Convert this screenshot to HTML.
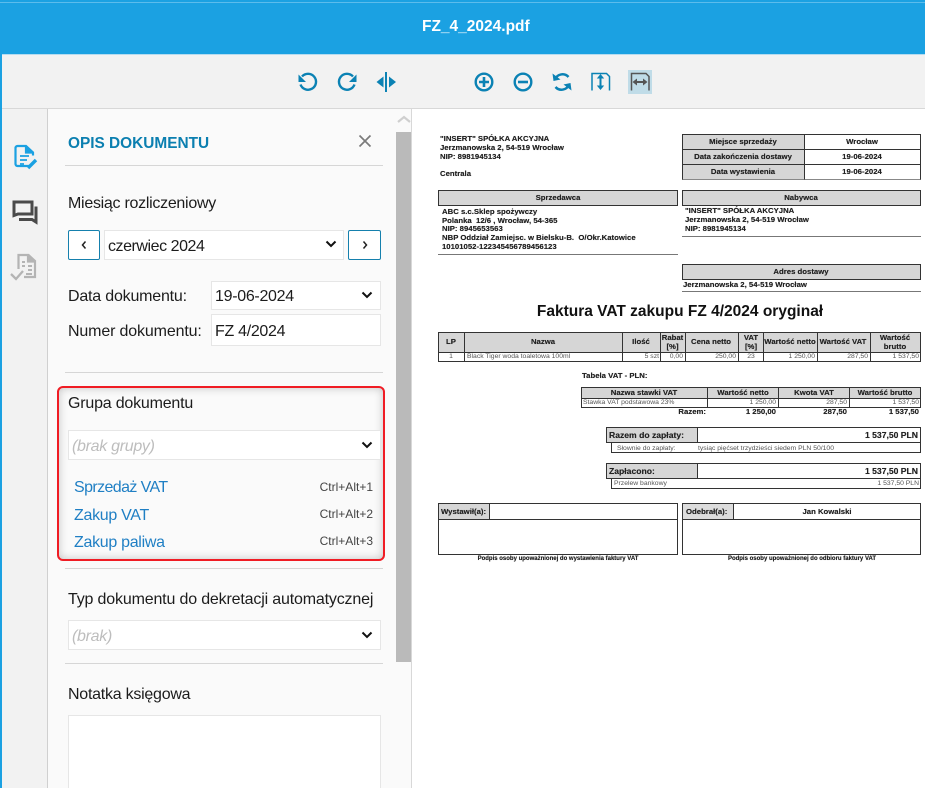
<!DOCTYPE html>
<html><head><meta charset="utf-8"><style>
html,body{margin:0;padding:0;width:925px;height:788px;overflow:hidden;background:#fff}
body{position:relative;font-family:"Liberation Sans",sans-serif;color:#1a1a1a}
.a{position:absolute;box-sizing:border-box}
.t{position:absolute;white-space:nowrap;line-height:1}
.l{font-size:16px;color:#1c1c1c;margin-top:1px;letter-spacing:-.2px}
.hr{position:absolute;left:65px;width:318px;height:1px;background:#d6d6d6}
.box{position:absolute;box-sizing:border-box;background:#fff;border:1px solid #e6e6e6}
.it{font-size:16px;color:#1f7fc4;left:74px;margin-top:1px;letter-spacing:-.3px}
.sc{font-size:12px;color:#444;right:552px}
.chev{position:absolute}
.p{position:absolute;white-space:nowrap;line-height:1;font-size:7.75px;color:#222;text-shadow:0 0 .4px #444}
.b{font-weight:bold}
.n{text-shadow:none;color:#555;font-size:6.8px;margin-top:1px}
.c{transform:translateX(-50%)}
.r{transform:translateX(-100%)}
.g{position:absolute;box-sizing:border-box;background:#d6d6d6;border:1px solid #333}
.w{position:absolute;box-sizing:border-box;background:#fff;border:1px solid #333}
.hl{position:absolute;height:1px;background:#777}
</style></head><body>
<div class="a" style="left:0;top:0;width:925px;height:54px;background:#1ba1e2"></div>
<div class="a" style="left:0;top:2px;width:925px;height:1px;background:#5cbcec"></div>
<div class="a" style="left:0;top:54px;width:925px;height:1px;background:#b6dcf0"></div>
<div class="t" style="left:422px;top:19px;font-size:15.5px;font-weight:bold;color:#fff">FZ_4_2024.pdf</div>
<div class="a" style="left:0;top:55px;width:925px;height:53px;background:#f2f2f2"></div>
<div class="a" style="left:0;top:108px;width:925px;height:1px;background:#d8d8d8"></div>
<div class="a" style="left:0;top:54px;width:2px;height:734px;background:#1ba1e2"></div>
<div class="a" style="left:2px;top:109px;width:45px;height:679px;background:#f2f2f2"></div>
<div class="a" style="left:47px;top:109px;width:1px;height:679px;background:#d0d0d0"></div>
<div class="a" style="left:48px;top:109px;width:363px;height:679px;background:#fafafa"></div>
<div class="a" style="left:411px;top:109px;width:1px;height:679px;background:#d8d8d8"></div>
<div class="a" style="left:396px;top:132px;width:15px;height:530px;background:#bababa"></div>

<!-- toolbar icons -->
<svg class="a" style="left:0;top:60px" width="925" height="45" viewBox="0 60 925 45" fill="none" stroke="#0b82b4" stroke-width="2.4">
<rect x="628" y="70" width="24" height="24" fill="#c0dce8" stroke="none"/>
<path d="M302 76.5a8 8 0 1 1-1.5 8"/><path d="M298.5 74.5v7.5h7.5z" fill="#0b82b4" stroke="none"/>
<path d="M353 76.5a8 8 0 1 0 1.500 8"/><path d="M356.500 74.500v7.500h-7.500z" fill="#0b82b4" stroke="none"/>
<path d="M386 72v20" stroke-width="2"/><path d="M383.500 76.500v11l-7-5.500zM389 76.500v11l7-5.500z" fill="#0b82b4" stroke="none"/>
<circle cx="484" cy="82" r="8.300"/><path d="M479 82h10M484 77v10" stroke-width="2.600"/>
<circle cx="523" cy="82" r="8.300"/><path d="M518 82h10" stroke-width="2.600"/>
<path d="M555 79.500a8 8 0 0 1 13.500-2.500M569 84.500a8 8 0 0 1-13.500 2.500" stroke-width="2.500"/>
<path d="M552.500 73.500l1 7.500 7-1.500zM571.500 90.500l-1-7.500-7 1.500z" fill="#0b82b4" stroke="none"/>
<path d="M592 90.500v-17h14.500l3 3v14" stroke-width="1.500"/><path d="M600.500 76v12" stroke-width="2"/><path d="M596.800 78.500l3.700-4.500 3.700 4.500zM596.800 85.500l3.700 4.500 3.700-4.500z" fill="#0b82b4" stroke="none"/>
<path d="M631.500 90.500v-17h14.500l3 3v14" stroke="#555" stroke-width="1.500"/><path d="M634 82h12" stroke="#555" stroke-width="2"/><path d="M637 78.500l-4.500 3.500 4.500 3.500zM643 78.500l4.500 3.500-4.500 3.500z" fill="#555" stroke="none"/>
</svg>
<svg class="a" style="left:396px;top:114px" width="16" height="12"><path d="M2 8l6-5 6 5" fill="none" stroke="#cfcfcf" stroke-width="2.200"/></svg>

<!-- rail icons -->
<svg class="a" style="left:10px;top:140px" width="30" height="32" fill="none" stroke="#1ba1e2" stroke-width="2.200">
<path d="M19 26H7.500a2 2 0 0 1-2-2V8a2 2 0 0 1 2-2h8.500l7 6.500v3"/><path d="M16 6.500v6h7" fill="#1ba1e2"/><path d="M10 16h9M10 20h7M10 24h4" stroke-width="1.800"/><path d="M18 28l8-8" stroke-width="3.400"/>
</svg>
<svg class="a" style="left:10px;top:197px" width="30" height="30" fill="none" stroke="#4a4a4a" stroke-width="3">
<path d="M4 17.500V5h18v12H8l-4 1.500z"/><path d="M26 9.500v15.500l-4-2.500H9"/>
</svg>
<svg class="a" style="left:8px;top:251px" width="30" height="34" fill="none" stroke="#b4b4b4" stroke-width="2.200">
<path d="M10.500 18V4h10l6.500 6v16h-11"/><path d="M20 4.500v6h7" fill="#b4b4b4"/><path d="M14 11h3M14 15h3M20 15h4M20 19h4M18 23h6" stroke-width="2"/><path d="M3 23l5 5 7-8" stroke-width="2.300"/>
</svg>

<!-- panel -->
<div class="t" style="left:68px;top:136px;font-size:15.4px;font-weight:bold;color:#0b7fb0">OPIS DOKUMENTU</div>
<svg class="a" style="left:358px;top:134px" width="14" height="14"><path d="M1.500 1.500l11 11M12.500 1.500l-11 11" stroke="#7a7a7a" stroke-width="1.700"/></svg>
<div class="hr" style="top:165px"></div>
<div class="t l" style="left:68px;top:195px;letter-spacing:-.28px">Miesiąc rozliczeniowy</div>
<div class="a" style="left:68px;top:230px;width:32px;height:30px;background:#fff;border:1px solid #1580ad;border-radius:2px"></div>
<svg class="a" style="left:80px;top:240px" width="8" height="10"><path d="M5.500 1.500L2.500 5l3 3.500" fill="none" stroke="#222" stroke-width="1.500"/></svg>
<div class="box" style="left:104px;top:230px;width:240px;height:30px"></div>
<div class="t l" style="left:108px;top:238px;letter-spacing:-.45px">czerwiec 2024</div>
<div class="a" style="left:348px;top:230px;width:33px;height:30px;background:#fff;border:1px solid #1580ad;border-radius:2px"></div>
<svg class="a" style="left:361px;top:240px" width="8" height="10"><path d="M2.500 1.500L5.500 5l-3 3.500" fill="none" stroke="#222" stroke-width="1.500"/></svg>
<svg class="chev" style="left:325px;top:240px" width="12" height="8"><path d="M1.500 1.500L6 6l4.500-4.500" fill="none" stroke="#111" stroke-width="2"/></svg>
<div class="t l" style="left:68px;top:288px">Data dokumentu:</div>
<div class="box" style="left:211px;top:281px;width:170px;height:29px"></div>
<div class="t l" style="left:215px;top:288px;letter-spacing:-.3px">19-06-2024</div>
<svg class="chev" style="left:361px;top:291px" width="12" height="8"><path d="M1.500 1.500L6 6l4.500-4.500" fill="none" stroke="#111" stroke-width="2"/></svg>
<div class="t l" style="left:68px;top:323px;letter-spacing:-.15px">Numer dokumentu:</div>
<div class="box" style="left:211px;top:314px;width:170px;height:32px"></div>
<div class="t l" style="left:215px;top:323px;letter-spacing:-.3px">FZ 4/2024</div>
<div class="hr" style="top:372px"></div>

<div class="a" style="left:57px;top:386px;width:328px;height:175px;border:2px solid #f01c24;border-radius:6px;box-shadow:inset 0 0 9px rgba(0,0,0,.22)"></div>
<div class="t l" style="left:68px;top:395px">Grupa dokumentu</div>
<div class="box" style="left:68px;top:430px;width:313px;height:30px"></div>
<div class="t l" style="left:72px;top:438px;font-style:italic;color:#bdbdbd;letter-spacing:-.3px">(brak grupy)</div>
<svg class="chev" style="left:361px;top:441px" width="12" height="8"><path d="M1.500 1.500L6 6l4.500-4.500" fill="none" stroke="#111" stroke-width="2"/></svg>
<div class="t it" style="top:479px;letter-spacing:-.6px">Sprzedaż VAT</div>
<div class="t sc" style="top:481px">Ctrl+Alt+1</div>
<div class="t it" style="top:507px">Zakup VAT</div>
<div class="t sc" style="top:508px">Ctrl+Alt+2</div>
<div class="t it" style="top:534px">Zakup paliwa</div>
<div class="t sc" style="top:535px">Ctrl+Alt+3</div>
<div class="hr" style="top:568px"></div>
<div class="t l" style="left:68px;top:591px;letter-spacing:-.17px">Typ dokumentu do dekretacji automatycznej</div>
<div class="box" style="left:68px;top:620px;width:313px;height:30px"></div>
<div class="t l" style="left:72px;top:628px;font-style:italic;color:#bdbdbd;letter-spacing:-.3px">(brak)</div>
<svg class="chev" style="left:361px;top:631px" width="12" height="8"><path d="M1.500 1.500L6 6l4.500-4.500" fill="none" stroke="#111" stroke-width="2"/></svg>
<div class="hr" style="top:663px"></div>
<div class="t l" style="left:68px;top:686px;letter-spacing:-.25px">Notatka księgowa</div>
<div class="box" style="left:68px;top:715px;width:313px;height:90px"></div>

<!-- PDF -->
<div class="p b" style="left:440px;top:135px">"INSERT" SPÓŁKA AKCYJNA</div>
<div class="p b" style="left:440px;top:144px">Jerzmanowska 2, 54-519 Wrocław</div>
<div class="p b" style="left:440px;top:153px">NIP: 8981945134</div>
<div class="p b" style="left:440px;top:170px">Centrala</div>

<div class="g" style="left:682px;top:134px;width:123px;height:16px"></div>
<div class="g" style="left:682px;top:149px;width:123px;height:16px"></div>
<div class="g" style="left:682px;top:164px;width:123px;height:16px;border-bottom-color:#888"></div>
<div class="w" style="left:804px;top:134px;width:117px;height:16px"></div>
<div class="w" style="left:804px;top:149px;width:117px;height:16px"></div>
<div class="w" style="left:804px;top:164px;width:117px;height:16px;border-bottom-color:#888"></div>
<div class="p b c" style="left:743px;top:138px">Miejsce sprzedaży</div>
<div class="p b c" style="left:743px;top:153px">Data zakończenia dostawy</div>
<div class="p b c" style="left:743px;top:168px">Data wystawienia</div>
<div class="p b c" style="left:862px;top:138px">Wrocław</div>
<div class="p b c" style="left:862px;top:153px">19-06-2024</div>
<div class="p b c" style="left:862px;top:168px">19-06-2024</div>

<div class="g" style="left:438px;top:190px;width:240px;height:16px"></div>
<div class="p b c" style="left:558px;top:194px">Sprzedawca</div>
<div class="p b" style="left:442px;top:208px">ABC s.c.Sklep spożywczy</div>
<div class="p b" style="left:442px;top:217px">Polanka&nbsp; 12/6 , Wrocław, 54-365</div>
<div class="p b" style="left:442px;top:225px">NIP: 8945653563</div>
<div class="p b" style="left:442px;top:234px">NBP Oddział Zamiejsc. w Bielsku-B.&nbsp; O/Okr.Katowice</div>
<div class="p b" style="left:442px;top:243px">10101052-122345456789456123</div>
<div class="hl" style="left:438px;top:254px;width:240px"></div>

<div class="g" style="left:682px;top:190px;width:239px;height:16px"></div>
<div class="p b c" style="left:801px;top:194px">Nabywca</div>
<div class="p b" style="left:685px;top:207px">"INSERT" SPÓŁKA AKCYJNA</div>
<div class="p b" style="left:685px;top:216px">Jerzmanowska 2, 54-519 Wrocław</div>
<div class="p b" style="left:685px;top:225px">NIP: 8981945134</div>
<div class="hl" style="left:682px;top:236px;width:239px"></div>

<div class="g" style="left:682px;top:264px;width:239px;height:16px"></div>
<div class="p b c" style="left:801px;top:268px">Adres dostawy</div>
<div class="p b" style="left:683px;top:281px">Jerzmanowska 2, 54-519 Wrocław</div>
<div class="hl" style="left:682px;top:291px;width:239px"></div>

<div class="t" style="left:680px;top:304px;transform:translateX(-50%);font-size:15.5px;font-weight:bold;color:#111">Faktura VAT zakupu FZ 4/2024 oryginał</div>

<div class="g" style="left:438px;top:332px;width:27px;height:21px"></div>
<div class="g" style="left:464px;top:332px;width:159px;height:21px"></div>
<div class="g" style="left:622px;top:332px;width:39px;height:21px"></div>
<div class="g" style="left:660px;top:332px;width:26px;height:21px"></div>
<div class="g" style="left:685px;top:332px;width:54px;height:21px"></div>
<div class="g" style="left:738px;top:332px;width:26px;height:21px"></div>
<div class="g" style="left:763px;top:332px;width:55px;height:21px"></div>
<div class="g" style="left:817px;top:332px;width:54px;height:21px"></div>
<div class="g" style="left:870px;top:332px;width:51px;height:21px"></div>
<div class="p b c" style="left:451px;top:338px">LP</div>
<div class="p b c" style="left:543px;top:338px">Nazwa</div>
<div class="p b c" style="left:641px;top:338px">Ilość</div>
<div class="p b c" style="left:672.500px;top:334px">Rabat</div>
<div class="p b c" style="left:672.500px;top:343px">[%]</div>
<div class="p b c" style="left:711px;top:338px">Cena netto</div>
<div class="p b c" style="left:751px;top:334px">VAT</div>
<div class="p b c" style="left:751px;top:343px">[%]</div>
<div class="p b c" style="left:790px;top:338px">Wartość netto</div>
<div class="p b c" style="left:843px;top:338px">Wartość VAT</div>
<div class="p b c" style="left:895px;top:334px">Wartość</div>
<div class="p b c" style="left:895px;top:343px">brutto</div>

<div class="w" style="left:438px;top:352px;width:27px;height:10px"></div>
<div class="w" style="left:464px;top:352px;width:159px;height:10px"></div>
<div class="w" style="left:622px;top:352px;width:39px;height:10px"></div>
<div class="w" style="left:660px;top:352px;width:26px;height:10px"></div>
<div class="w" style="left:685px;top:352px;width:54px;height:10px"></div>
<div class="w" style="left:738px;top:352px;width:26px;height:10px"></div>
<div class="w" style="left:763px;top:352px;width:55px;height:10px"></div>
<div class="w" style="left:817px;top:352px;width:54px;height:10px"></div>
<div class="w" style="left:870px;top:352px;width:51px;height:10px"></div>
<div class="p n c" style="left:451px;top:353px">1</div>
<div class="p n" style="left:467px;top:353px">Black Tiger woda toaletowa 100ml</div>
<div class="p n r" style="left:659px;top:353px">5 szt</div>
<div class="p n r" style="left:683px;top:353px">0,00</div>
<div class="p n r" style="left:736px;top:353px">250,00</div>
<div class="p n c" style="left:751px;top:353px">23</div>
<div class="p n r" style="left:815px;top:353px">1 250,00</div>
<div class="p n r" style="left:868px;top:353px">287,50</div>
<div class="p n r" style="left:919px;top:353px">1 537,50</div>

<div class="p b" style="left:582px;top:372px">Tabela VAT - PLN:</div>
<div class="g" style="left:581px;top:387px;width:127px;height:12px"></div>
<div class="g" style="left:707px;top:387px;width:72px;height:12px"></div>
<div class="g" style="left:778px;top:387px;width:72px;height:12px"></div>
<div class="g" style="left:849px;top:387px;width:72px;height:12px"></div>
<div class="p b c" style="left:644px;top:389px">Nazwa stawki VAT</div>
<div class="p b c" style="left:743px;top:389px">Wartość netto</div>
<div class="p b c" style="left:814px;top:389px">Kwota VAT</div>
<div class="p b c" style="left:885px;top:389px">Wartość brutto</div>
<div class="w" style="left:581px;top:398px;width:127px;height:10px"></div>
<div class="w" style="left:707px;top:398px;width:72px;height:10px"></div>
<div class="w" style="left:778px;top:398px;width:72px;height:10px"></div>
<div class="w" style="left:849px;top:398px;width:72px;height:10px"></div>
<div class="p n" style="left:583px;top:399px">Stawka VAT podstawowa 23%</div>
<div class="p n r" style="left:776px;top:399px">1 250,00</div>
<div class="p n r" style="left:847px;top:399px">287,50</div>
<div class="p n r" style="left:919px;top:399px">1 537,50</div>
<div class="p b r" style="left:706px;top:408px">Razem:</div>
<div class="p b r" style="left:776px;top:408px">1 250,00</div>
<div class="p b r" style="left:847px;top:408px">287,50</div>
<div class="p b r" style="left:919px;top:408px">1 537,50</div>

<div class="g" style="left:606px;top:427px;width:92px;height:16px"></div>
<div class="w" style="left:697px;top:427px;width:224px;height:16px"></div>
<div class="p b" style="left:609px;top:431px;font-size:8.600px">Razem do zapłaty:</div>
<div class="p b r" style="left:918px;top:431px;font-size:8.600px">1 537,50 PLN</div>
<div class="w" style="left:611px;top:442px;width:310px;height:11px"></div>
<div class="p n" style="left:617px;top:445px">Słownie do zapłaty:</div>
<div class="p n" style="left:698px;top:445px">tysiąc pięćset trzydzieści siedem PLN 50/100</div>

<div class="g" style="left:606px;top:463px;width:92px;height:16px"></div>
<div class="w" style="left:697px;top:463px;width:224px;height:16px"></div>
<div class="p b" style="left:609px;top:467px;font-size:8.600px">Zapłacono:</div>
<div class="p b r" style="left:918px;top:467px;font-size:8.600px">1 537,50 PLN</div>
<div class="w" style="left:611px;top:478px;width:310px;height:11px"></div>
<div class="p n" style="left:614px;top:480px">Przelew bankowy</div>
<div class="p n r" style="left:919px;top:480px">1 537,50 PLN</div>

<div class="w" style="left:438px;top:503px;width:240px;height:52px"></div>
<div class="g" style="left:438px;top:503px;width:52px;height:17px"></div>
<div class="w" style="left:489px;top:503px;width:189px;height:17px"></div>
<div class="p b" style="left:441px;top:508px">Wystawił(a):</div>
<div class="w" style="left:682px;top:503px;width:239px;height:52px"></div>
<div class="g" style="left:682px;top:503px;width:52px;height:17px;background:#dcdcdc"></div>
<div class="w" style="left:733px;top:503px;width:188px;height:17px"></div>
<div class="p b" style="left:686px;top:508px">Odebrał(a):</div>
<div class="p b c" style="left:827px;top:508px">Jan Kowalski</div>
<div class="p b c" style="left:558px;top:556px;font-size:6px">Podpis osoby upoważnionej do wystawienia faktury VAT</div>
<div class="p b c" style="left:802px;top:556px;font-size:6px">Podpis osoby upoważnionej do odbioru faktury VAT</div>
</body></html>
